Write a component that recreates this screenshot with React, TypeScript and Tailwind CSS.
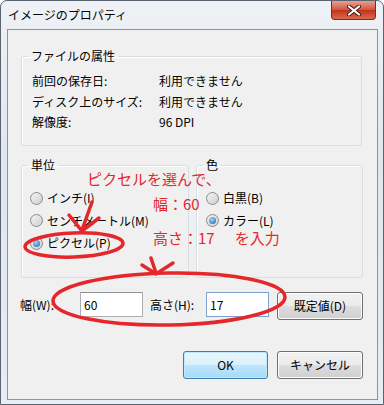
const jp = { fontFamily: '"Noto Sans CJK JP", "Noto Sans", sans-serif' };

function Radio({ label, checked }: { label: string; checked?: boolean }) {
  return (
    <div className="flex h-[22.5px] items-center gap-[4px]">
      <span className="flex h-[13px] w-[13px] items-center justify-center rounded-full border border-[#8a8a8a] bg-[linear-gradient(135deg,#f4f4f4,#cfcfcf)]">
        {checked && (
          <span className="h-[7px] w-[7px] rounded-full bg-[radial-gradient(circle_at_40%_35%,#9ad8ff,#1b5ea3)]" />
        )}
      </span>
      <span className="text-[12px] text-black">{label}</span>
    </div>
  );
}

function Group({ title, className, children }: { title: string; className: string; children: React.ReactNode }) {
  return (
    <fieldset className={`rounded-[3px] border border-[#d5dfe5] shadow-[inset_1px_1px_0_#fff] ${className}`}>
      <legend className="ml-[6px] px-[3px] text-[12px] leading-[16px] text-black">{title}</legend>
      {children}
    </fieldset>
  );
}

function Button({ label, primary }: { label: string; primary?: boolean }) {
  return (
    <button
      className={
        primary
          ? "h-[28px] w-[85px] rounded-[3px] border border-[#3c7fb1] bg-[linear-gradient(#eaf6fd,#d9f0fc_50%,#bee6fd_51%,#a7d9f5)] text-[12px] shadow-[inset_0_0_0_1px_#bfe8fc]"
          : "h-[28px] w-[86px] rounded-[3px] border border-[#707070] bg-[linear-gradient(#f2f2f2,#ebebeb_50%,#dddddd_51%,#cfcfcf)] text-[12px] shadow-[inset_0_0_0_1px_#fcfcfc]"
      }
    >
      {label}
    </button>
  );
}

export default function App() {
  return (
    <div className="relative h-[405px] w-[384px] overflow-hidden rounded-t-[7px] border border-[#5a6470] bg-[linear-gradient(180deg,#eef2f6,#dfe6ed_40%,#e7edf2)]" style={jp}>
      {/* title bar */}
      <div className="flex h-[28px] items-start justify-between">
        <span className="mt-[5px] ml-[7px] text-[12px] text-black">イメージのプロパティ</span>
        <div className="mr-[7px] flex h-[19px] w-[45px] items-center justify-center rounded-b-[4px] border border-t-0 border-[#7a2a24] bg-[linear-gradient(#e8a08f,#d3533f_50%,#c2321d_51%,#d76a4e)]">
          <svg width="14" height="11" viewBox="0 0 14 11">
            <path d="M2 1.5 L12 9.5 M12 1.5 L2 9.5" stroke="#3b1a16" strokeWidth="4" strokeLinecap="round" />
            <path d="M2 1.5 L12 9.5 M12 1.5 L2 9.5" stroke="#fff" strokeWidth="2.2" strokeLinecap="round" />
          </svg>
        </div>
      </div>

      {/* client area */}
      <div className="ml-[6px] h-[371px] w-[371px] border border-[#8b949c] bg-[#f0f0f0]">
        <div className="pt-[18px] pl-[13px]">
          <Group title="ファイルの属性" className="h-[98px] w-[341px]">
            <div className="pt-[7px] pl-[10px] text-[12px] text-black">
              {[
                ["前回の保存日:", "利用できません"],
                ["ディスク上のサイズ:", "利用できません"],
                ["解像度:", "96 DPI"],
              ].map(([k, v]) => (
                <div key={k} className="flex h-[20.5px] items-center">
                  <span className="w-[127px]">{k}</span>
                  <span>{v}</span>
                </div>
              ))}
            </div>
          </Group>

          <div className="mt-[11px] flex gap-[7px]">
            <Group title="単位" className="h-[121px] w-[168px]">
              <div className="pt-[14px] pl-[8px]">
                <Radio label="インチ(I)" />
                <Radio label="センチメートル(M)" />
                <Radio label="ピクセル(P)" checked />
              </div>
            </Group>
            <Group title="色" className="h-[121px] w-[167px]">
              <div className="pt-[14px] pl-[9px]">
                <Radio label="白黒(B)" />
                <Radio label="カラー(L)" checked />
              </div>
            </Group>
          </div>
        </div>

        <div className="mt-[14px] flex items-start pl-[12px] text-[12px] text-black">
          <span className="flex h-[25px] w-[60px] items-center">幅(W):</span>
          <div className="flex h-[25px] w-[63px] items-center border border-[#abadb3] border-t-[#8e9296] bg-white pl-[3px]">60</div>
          <span className="ml-[7px] flex h-[25px] w-[56px] items-center">高さ(H):</span>
          <div className="flex h-[25px] w-[63px] items-center border border-[#7da2ce] bg-white pl-[3px]">17</div>
          <div className="ml-[8px]">
            <Button label="既定値(D)" />
          </div>
        </div>

        <div className="mt-[31px] flex justify-end gap-[9px] pr-[14px] text-black">
          <Button label="OK" primary />
          <Button label="キャンセル" />
        </div>
      </div>

      {/* red annotations */}
      <div className="absolute top-[168px] left-[86px] text-[15px] leading-[20px] text-[#e5262b]">ピクセルを選んで、</div>
      <div className="absolute top-[193px] left-[152px] text-[15px] leading-[20px] text-[#e5262b]">幅：60</div>
      <div className="absolute top-[227px] left-[152px] text-[15px] leading-[20px] text-[#e5262b]">
        高さ：17<span className="ml-[20px]">を入力</span>
      </div>
      <svg className="pointer-events-none absolute top-0 left-0" width="384" height="405" viewBox="0 0 384 405">
        <g fill="none" stroke="#e5262b" strokeWidth="3.5" strokeLinecap="round">
          <ellipse cx="73" cy="244" rx="49" ry="12" transform="rotate(-2 73 244)" />
          <ellipse cx="168" cy="298" rx="116" ry="26" transform="rotate(-1 168 298)" />
          <path d="M91 201 L81 229 M68 214 L81 230 L98 217" />
          <path d="M150 257 L155 272 M141 264 L155 273 L172 262" />
        </g>
      </svg>
    </div>
  );
}
